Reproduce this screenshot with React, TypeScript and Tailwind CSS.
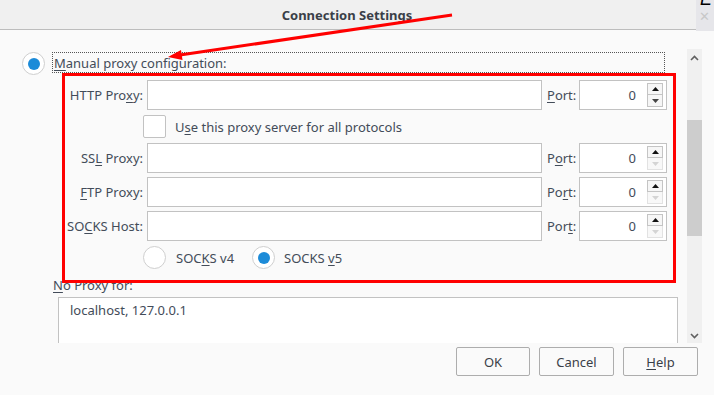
import React from "react";

const U = ({ c }: { c: string }) => <span className="underline underline-offset-[2px] decoration-[1px]">{c}</span>;

function Spinner({ enabledDown }: { enabledDown: boolean }) {
  return (
    <div className="flex flex-col mr-[3px] ml-[11px]">
      <div className="w-[16px] h-[12px] border border-[#c4c4c4] bg-[#f6f6f6] flex items-center justify-center">
        <svg width="7" height="4" viewBox="0 0 7 4"><polygon points="3.5,0 7,4 0,4" fill="#111" /></svg>
      </div>
      <div className={"w-[16px] h-[12px] border border-t-0 flex items-center justify-center " + (enabledDown ? "border-[#c4c4c4] bg-[#f6f6f6]" : "border-[#e2e2e2] bg-[#f8f8f8]")}>
        <svg width="7" height="4" viewBox="0 0 7 4"><polygon points="0,0 7,0 3.5,4" fill={enabledDown ? "#444" : "#d4d4d4"} /></svg>
      </div>
    </div>
  );
}

function Row({ label, port, enabledDown, mt }: { label: React.ReactNode; port: React.ReactNode; enabledDown: boolean; mt: string }) {
  return (
    <div className={"flex items-center h-[30px] " + mt}>
      <div className="w-[81px] text-right whitespace-nowrap">{label}</div>
      <div className="ml-[4px] w-[395px] h-[30px] border border-[#c2c2c2] bg-white" />
      <div className="ml-[5px] w-[29px] whitespace-nowrap">{port}</div>
      <div className="ml-[3px] w-[88px] h-[30px] border border-[#c2c2c2] bg-white flex items-center justify-end">
        <span>0</span>
        <Spinner enabledDown={enabledDown} />
      </div>
    </div>
  );
}

function Radio({ checked }: { checked: boolean }) {
  return (
    <div className="w-[23px] h-[23px] rounded-full border-[1.5px] border-[#cfcfcf] bg-white flex items-center justify-center shrink-0">
      {checked && <div className="w-[12px] h-[12px] rounded-full bg-[#1c8bd8]" />}
    </div>
  );
}

export default function App() {
  return (
    <div className="w-[714px] h-[395px] bg-[#fafafa] relative overflow-hidden font-['Noto_Sans',sans-serif] text-[13px] leading-[18px] text-[#434c59]">
      {/* title bar */}
      <div className="h-[30px] bg-[#f0f0f0] border-b border-[#bdbdbd] flex items-center justify-center">
        <span className="font-bold text-[13px] text-[#3a3f48] ml-[-20px]">Connection Settings</span>
      </div>
      <div className="absolute right-0 top-0 w-[18px] h-[31px] bg-[#e6e6ea] overflow-hidden">
        <span className="absolute left-[4px] top-[-10px] text-[18px] italic text-black font-['Liberation_Sans',sans-serif]">E</span>
        <span className="absolute left-[3px] top-[8px] text-[13px] text-[#c8c8c8] font-['Liberation_Sans',sans-serif]">✕</span>
      </div>

      {/* body */}
      <div className="flex h-[313px] overflow-hidden">
        <div className="w-[687px] pt-[22px]">
          <div className="flex items-start h-[21px]">
            <div className="ml-[22px]"><Radio checked /></div>
            <div className="ml-[7px] w-[613px] h-[21px] border border-dotted border-[#555] flex items-center pl-[1px]">
              <span><U c="M" />anual proxy configuration:</span>
            </div>
          </div>

          <div className="mt-[7px] pl-[62px]">
            <Row mt="" label={<>HTTP Pro<U c="x" />y:</>} port={<><U c="P" />ort:</>} enabledDown />
            <div className="mt-[5px] h-[23px] flex items-center pl-[81px]">
              <div className="w-[23px] h-[23px] border border-[#c2c2c2] bg-white rounded-[2px]" />
              <span className="ml-[9px]">U<U c="s" />e this proxy server for all protocols</span>
            </div>
            <Row mt="mt-[5px]" label={<>SS<U c="L" /> Proxy:</>} port={<>P<U c="o" />rt:</>} enabledDown={false} />
            <Row mt="mt-[4px]" label={<><U c="F" />TP Proxy:</>} port={<>Po<U c="r" />t:</>} enabledDown={false} />
            <Row mt="mt-[4px]" label={<>SO<U c="C" />KS Host:</>} port={<>Por<U c="t" />:</>} enabledDown={false} />
            <div className="mt-[5px] h-[23px] flex items-center pl-[81px]">
              <div className="w-[109px] flex items-center">
                <Radio checked={false} />
                <span className="ml-[10px]">SOC<U c="K" />S v4</span>
              </div>
              <Radio checked />
              <span className="ml-[9px]">SOCKS <U c="v" />5</span>
            </div>
          </div>

          <div className="mt-[7px] pl-[53px]"><U c="N" />o Proxy for:</div>
          <div className="mt-[3px] ml-[58px] w-[620px] h-[60px] border border-[#c2c2c2] bg-white pl-[11px] pt-[3px]">
            localhost, 127.0.0.1
          </div>
        </div>

        {/* scrollbar */}
        <div className="w-[15px] mt-[19px] h-[294px] bg-[#f0f0f0] flex flex-col items-center">
          <svg className="mt-[6px]" width="9" height="6" viewBox="0 0 9 6"><polyline points="1,5 4.5,1.5 8,5" fill="none" stroke="#606060" strokeWidth="1.6" /></svg>
          <div className="mt-[59px] w-[15px] h-[116px] bg-[#cdcdcd]" />
          <svg className="mt-[97px]" width="9" height="6" viewBox="0 0 9 6"><polyline points="1,1 4.5,4.5 8,1" fill="none" stroke="#606060" strokeWidth="1.6" /></svg>
        </div>
      </div>

      {/* buttons */}
      <div className="mt-[4px] flex justify-end pr-[16px] gap-[9px]">
        <button className="w-[74px] h-[29px] border border-[#adadad] rounded-[2px] bg-[#fafafa] text-[#3a3f48]">OK</button>
        <button className="w-[75px] h-[29px] border border-[#adadad] rounded-[2px] bg-[#fafafa] text-[#3a3f48]">Cancel</button>
        <button className="w-[75px] h-[29px] border border-[#adadad] rounded-[2px] bg-[#fafafa] text-[#3a3f48]"><U c="H" />elp</button>
      </div>

      {/* annotation overlays */}
      <div className="absolute left-[62px] top-[73px] w-[614px] h-[210px] border-[3px] border-[#ff0000] pointer-events-none" />
      <svg className="absolute left-0 top-0 pointer-events-none" width="714" height="395" viewBox="0 0 714 395">
        <line x1="452" y1="15" x2="180" y2="55" stroke="#ff0000" strokeWidth="3" />
        <polygon points="168,57 182.5,60 181,50" fill="#ff0000" />
      </svg>
    </div>
  );
}
